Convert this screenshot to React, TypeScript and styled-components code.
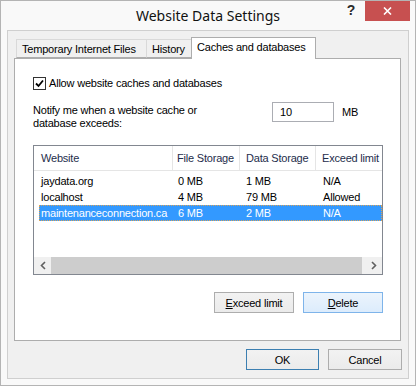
import React from "react";
import styled, { createGlobalStyle } from "styled-components";

// Win8 style "Website Data Settings" dialog

const GlobalStyle = createGlobalStyle`
  html, body {
    margin: 0;
    padding: 0;
    background: #ffffff;
  }
  body {
    font-family: "Liberation Sans", Arial, sans-serif;
    font-size: 11px;
    letter-spacing: -0.2px;
    color: #000;
  }
  * {
    box-sizing: border-box;
  }
`;

const Window = styled.div`
  width: 416px;
  height: 386px;
  border: 1px solid #b4b4b4;
  background: #f9f9f9;
  display: flex;
  flex-direction: column;
`;

const TitleBar = styled.div`
  height: 29px;
  display: grid;
  grid-template-columns: 1fr auto 1fr;
  align-items: start;
`;

const Title = styled.div`
  grid-column: 2;
  font-family: "Noto Sans", "Open Sans", sans-serif;
  font-size: 14px;
  letter-spacing: 0;
  line-height: 29px;
  color: #111;
`;

const Controls = styled.div`
  grid-column: 3;
  display: flex;
  justify-content: flex-end;
  padding-right: 5px;
`;

const HelpButton = styled.div`
  width: 28px;
  height: 20px;
  display: flex;
  align-items: center;
  justify-content: center;
  font-family: "Liberation Sans", Arial, sans-serif;
  font-weight: bold;
  font-size: 14px;
  color: #2b2b2b;
  padding-bottom: 2px;
`;

const CloseButton = styled.div`
  width: 45px;
  height: 20px;
  background: #c75050;
  display: flex;
  align-items: center;
  justify-content: center;
`;

const Client = styled.div`
  flex: 1;
  margin: 0 6px 6px 6px;
  border: 1px solid #cfcfcf;
  background: #f0f0f0;
  padding: 6px 7px 0 6px;
  display: flex;
  flex-direction: column;
`;

const TabStrip = styled.div`
  display: flex;
  align-items: flex-end;
  height: 21px;
  padding-left: 2px;
`;

const Tab = styled.div<{ $w: number; $active?: boolean }>`
  width: ${(p) => p.$w}px;
  height: ${(p) => (p.$active ? 22 : 19)}px;
  margin-left: -1px;
  margin-bottom: ${(p) => (p.$active ? -1 : 0)}px;
  position: relative;
  z-index: ${(p) => (p.$active ? 2 : 1)};
  border: 1px solid ${(p) => (p.$active ? "#adadad" : "#d9d9d9")};
  border-bottom: ${(p) => (p.$active ? "none" : "1px solid #adadad")};
  background: ${(p) => (p.$active ? "#ffffff" : "#f0f0f0")};
  padding: 3px 0 0 5px;
  white-space: nowrap;
  color: #000;
  &:first-child {
    margin-left: 0;
  }
`;

const Panel = styled.div`
  height: 283px;
  border: 1px solid #adadad;
  background: #ffffff;
  padding: 18px 17px 0 18px;
  display: flex;
  flex-direction: column;
`;

const CheckRow = styled.label`
  display: flex;
  align-items: center;
  gap: 3px;
  height: 13px;
  line-height: 13px;
`;

const CheckBox = styled.span`
  width: 13px;
  height: 13px;
  border: 1px solid #333;
  background: #fff;
  display: flex;
  align-items: center;
  justify-content: center;
`;

const NotifyRow = styled.div`
  display: flex;
  align-items: flex-start;
  margin-top: 12px;
  height: 27px;
`;

const NotifyText = styled.div`
  width: 239px;
  line-height: 13px;
  padding-top: 2px;
`;

const SizeInput = styled.div`
  width: 62px;
  height: 20px;
  border: 1px solid #abadb3;
  padding: 3px 0 0 7px;
  line-height: 13px;
`;

const Unit = styled.div`
  margin-left: 8px;
  line-height: 13px;
  padding-top: 4px;
`;

const ListBox = styled.div`
  margin-top: 16px;
  width: 350px;
  height: 130px;
  border: 1px solid #828790;
  display: flex;
  flex-direction: column;
  overflow: hidden;
`;

const cols = "139px 67px 76px 1fr";

const HeaderRow = styled.div`
  display: grid;
  grid-template-columns: ${cols};
  height: 25px;
  border-bottom: 1px solid #e5e5e5;
  color: #1e2d4b;
`;

const HeaderCell = styled.div<{ $pad: number }>`
  padding-left: ${(p) => p.$pad}px;
  line-height: 24px;
  border-right: 1px solid #e5e5e5;
  white-space: nowrap;
  overflow: hidden;
  &:last-child {
    border-right: none;
  }
`;

const Rows = styled.div`
  flex: 1;
  padding-top: 2px;
`;

const Row = styled.div<{ $selected?: boolean }>`
  display: grid;
  grid-template-columns: 134px 67px 76px 1fr;
  margin-left: 5px;
  height: 16px;
  line-height: 16px;
  background: ${(p) => (p.$selected ? "#3399ff" : "transparent")};
  color: ${(p) => (p.$selected ? "#ffffff" : "#000")};
  outline: ${(p) => (p.$selected ? "1px dotted #d9a35a" : "none")};
  outline-offset: -1px;
`;

const Cell = styled.div<{ $pad: number }>`
  padding-left: ${(p) => p.$pad}px;
  white-space: nowrap;
  overflow: hidden;
`;

const ScrollBar = styled.div`
  height: 17px;
  background: #f0f0f0;
  display: flex;
`;

const ScrollArrow = styled.div`
  width: 17px;
  display: flex;
  align-items: center;
  justify-content: center;
`;

const Thumb = styled.div`
  flex: 1;
  margin-right: 3px;
  background: #cdcdcd;
`;

const ButtonRow = styled.div<{ $top: number }>`
  display: flex;
  justify-content: flex-end;
  gap: 9px;
  margin-top: ${(p) => p.$top}px;
`;

const Button = styled.div<{ $w: number; $variant?: "hot" | "default" }>`
  width: ${(p) => p.$w}px;
  height: 21px;
  display: flex;
  align-items: center;
  justify-content: center;
  border: 1px solid
    ${(p) =>
      p.$variant === "hot" ? "#7eb4ea" : p.$variant === "default" ? "#3c7fb1" : "#adadad"};
  background: ${(p) =>
    p.$variant === "hot" ? "linear-gradient(#ecf4fc, #dcecfc)" : "linear-gradient(#f2f2f2, #ebebeb)"};
  color: #000;
  u {
    text-decoration: underline;
  }
`;

const Footer = styled(ButtonRow)`
  margin-right: -1px;
`;

const Chevron = ({ dir }: { dir: "left" | "right" }) => (
  <svg width="6" height="9" viewBox="0 0 6 9">
    <path
      d={dir === "left" ? "M5 1 L1.5 4.5 L5 8" : "M1 1 L4.5 4.5 L1 8"}
      fill="none"
      stroke="#606060"
      strokeWidth="1.6"
    />
  </svg>
);

const sites = [
  { name: "jaydata.org", file: "0 MB", data: "1 MB", limit: "N/A" },
  { name: "localhost", file: "4 MB", data: "79 MB", limit: "Allowed" },
  { name: "maintenanceconnection.ca", file: "6 MB", data: "2 MB", limit: "N/A", selected: true },
];

export default function App() {
  return (
    <>
      <GlobalStyle />
      <Window>
        <TitleBar>
          <Title>Website Data Settings</Title>
          <Controls>
            <HelpButton>?</HelpButton>
            <CloseButton>
              <svg width="9" height="8" viewBox="0 0 9 8">
                <path d="M1 0.5 L8 7.5 M8 0.5 L1 7.5" stroke="#fff" strokeWidth="1.6" />
              </svg>
            </CloseButton>
          </Controls>
        </TitleBar>

        <Client>
          <TabStrip>
            <Tab $w={131}>Temporary Internet Files</Tab>
            <Tab $w={46}>History</Tab>
            <Tab $w={125} $active>
              Caches and databases
            </Tab>
          </TabStrip>

          <Panel>
            <CheckRow>
              <CheckBox>
                <svg width="9" height="9" viewBox="0 0 9 9">
                  <path d="M1 4.5 L3.5 7 L8 1.5" fill="none" stroke="#000" strokeWidth="1.8" />
                </svg>
              </CheckBox>
              Allow website caches and databases
            </CheckRow>

            <NotifyRow>
              <NotifyText>
                Notify me when a website cache or
                <br />
                database exceeds:
              </NotifyText>
              <SizeInput>10</SizeInput>
              <Unit>MB</Unit>
            </NotifyRow>

            <ListBox>
              <HeaderRow>
                <HeaderCell $pad={7}>Website</HeaderCell>
                <HeaderCell $pad={4}>File Storage</HeaderCell>
                <HeaderCell $pad={6}>Data Storage</HeaderCell>
                <HeaderCell $pad={6}>Exceed limit</HeaderCell>
              </HeaderRow>
              <Rows>
                {sites.map((s) => (
                  <Row key={s.name} $selected={s.selected}>
                    <Cell $pad={2}>{s.name}</Cell>
                    <Cell $pad={5}>{s.file}</Cell>
                    <Cell $pad={6}>{s.data}</Cell>
                    <Cell $pad={7}>{s.limit}</Cell>
                  </Row>
                ))}
              </Rows>
              <ScrollBar>
                <ScrollArrow>
                  <Chevron dir="left" />
                </ScrollArrow>
                <Thumb />
                <ScrollArrow>
                  <Chevron dir="right" />
                </ScrollArrow>
              </ScrollBar>
            </ListBox>

            <ButtonRow $top={17}>
              <Button $w={80}>
                <span>
                  <u>E</u>xceed limit
                </span>
              </Button>
              <Button $w={80} $variant="hot">
                <span>
                  <u>D</u>elete
                </span>
              </Button>
            </ButtonRow>
          </Panel>

          <Footer $top={8}>
            <Button $w={73} $variant="default">
              OK
            </Button>
            <Button $w={74}>Cancel</Button>
          </Footer>
        </Client>
      </Window>
    </>
  );
}
